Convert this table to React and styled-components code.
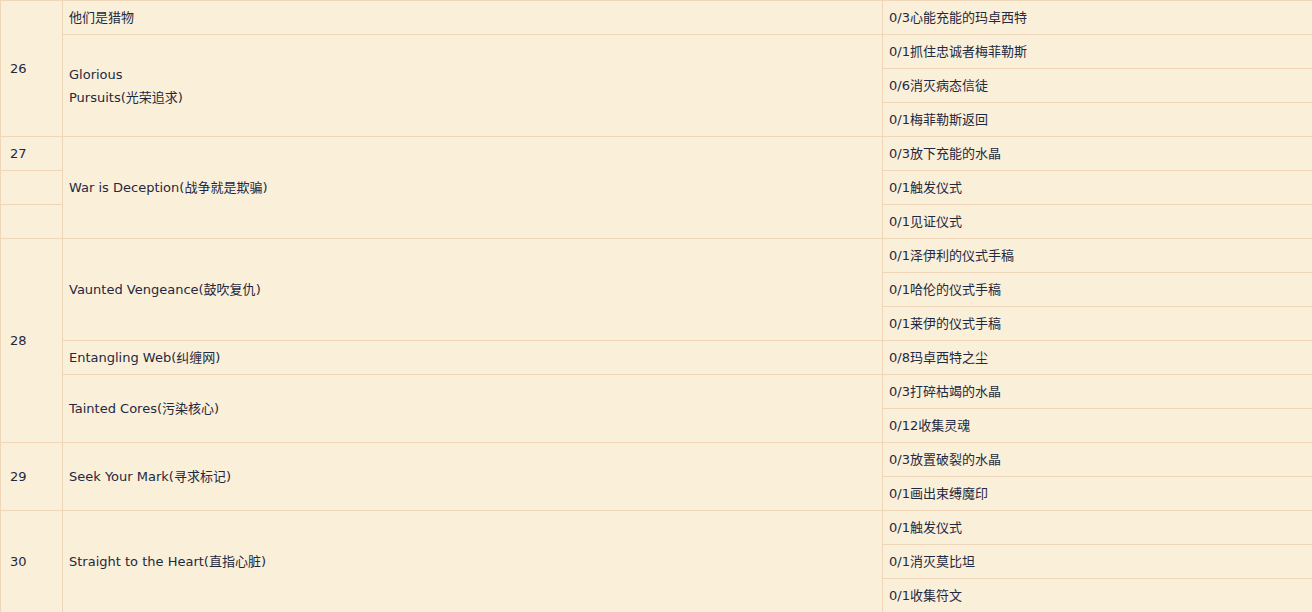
import React from "react";
import styled, { createGlobalStyle } from "styled-components";

const Global = createGlobalStyle`
  html, body { margin: 0; padding: 0; background: #faefd9; }
  body { overflow: hidden; }
`;

const Table = styled.table`
  width: 1312px;
  border-collapse: collapse;
  table-layout: fixed;
  background: #faefd9;
  font-family: "DejaVu Sans", Verdana, "Noto Sans CJK SC", sans-serif;
  font-size: 13px;
  color: #1f2940;
`;

const Cell = styled.td`
  border: 1px solid #f0d6b8;
  padding: 5px 6px;
  padding-left: ${(p) => (p.$num ? "9px" : "6px")};
  line-height: 23px;
  vertical-align: middle;
  white-space: nowrap;
`;

const Cjk = styled.span`
  font-family: "Noto Sans CJK SC", sans-serif;
  line-height: 1;
`;

const T = ({ en, zh }) => (
  <>
    {en}
    <Cjk>{zh}</Cjk>
  </>
);

export default function App() {
  return (
    <>
      <Global />
      <Table>
        <colgroup>
          <col style={{ width: 62 }} />
          <col style={{ width: 820 }} />
          <col style={{ width: 430 }} />
        </colgroup>
        <tbody>
          <tr>
            <Cell $num rowSpan={4}>26</Cell>
            <Cell><T zh="他们是猎物" /></Cell>
            <Cell><T en="0/3" zh="心能充能的玛卓西特" /></Cell>
          </tr>
          <tr>
            <Cell rowSpan={3}>
              Glorious
              <br />
              <T en="Pursuits(" zh="光荣追求" />)
            </Cell>
            <Cell><T en="0/1" zh="抓住忠诚者梅菲勒斯" /></Cell>
          </tr>
          <tr>
            <Cell><T en="0/6" zh="消灭病态信徒" /></Cell>
          </tr>
          <tr>
            <Cell><T en="0/1" zh="梅菲勒斯返回" /></Cell>
          </tr>
          <tr>
            <Cell $num>27</Cell>
            <Cell rowSpan={3}><T en="War is Deception(" zh="战争就是欺骗" />)</Cell>
            <Cell><T en="0/3" zh="放下充能的水晶" /></Cell>
          </tr>
          <tr>
            <Cell $num />
            <Cell><T en="0/1" zh="触发仪式" /></Cell>
          </tr>
          <tr>
            <Cell $num />
            <Cell><T en="0/1" zh="见证仪式" /></Cell>
          </tr>
          <tr>
            <Cell $num rowSpan={6}>28</Cell>
            <Cell rowSpan={3}><T en="Vaunted Vengeance(" zh="鼓吹复仇" />)</Cell>
            <Cell><T en="0/1" zh="泽伊利的仪式手稿" /></Cell>
          </tr>
          <tr>
            <Cell><T en="0/1" zh="哈伦的仪式手稿" /></Cell>
          </tr>
          <tr>
            <Cell><T en="0/1" zh="莱伊的仪式手稿" /></Cell>
          </tr>
          <tr>
            <Cell><T en="Entangling Web(" zh="纠缠网" />)</Cell>
            <Cell><T en="0/8" zh="玛卓西特之尘" /></Cell>
          </tr>
          <tr>
            <Cell rowSpan={2}><T en="Tainted Cores(" zh="污染核心" />)</Cell>
            <Cell><T en="0/3" zh="打碎枯竭的水晶" /></Cell>
          </tr>
          <tr>
            <Cell><T en="0/12" zh="收集灵魂" /></Cell>
          </tr>
          <tr>
            <Cell $num rowSpan={2}>29</Cell>
            <Cell rowSpan={2}><T en="Seek Your Mark(" zh="寻求标记" />)</Cell>
            <Cell><T en="0/3" zh="放置破裂的水晶" /></Cell>
          </tr>
          <tr>
            <Cell><T en="0/1" zh="画出束缚魔印" /></Cell>
          </tr>
          <tr>
            <Cell $num rowSpan={3}>30</Cell>
            <Cell rowSpan={3}><T en="Straight to the Heart(" zh="直指心脏" />)</Cell>
            <Cell><T en="0/1" zh="触发仪式" /></Cell>
          </tr>
          <tr>
            <Cell><T en="0/1" zh="消灭莫比坦" /></Cell>
          </tr>
          <tr>
            <Cell><T en="0/1" zh="收集符文" /></Cell>
          </tr>
        </tbody>
      </Table>
    </>
  );
}
